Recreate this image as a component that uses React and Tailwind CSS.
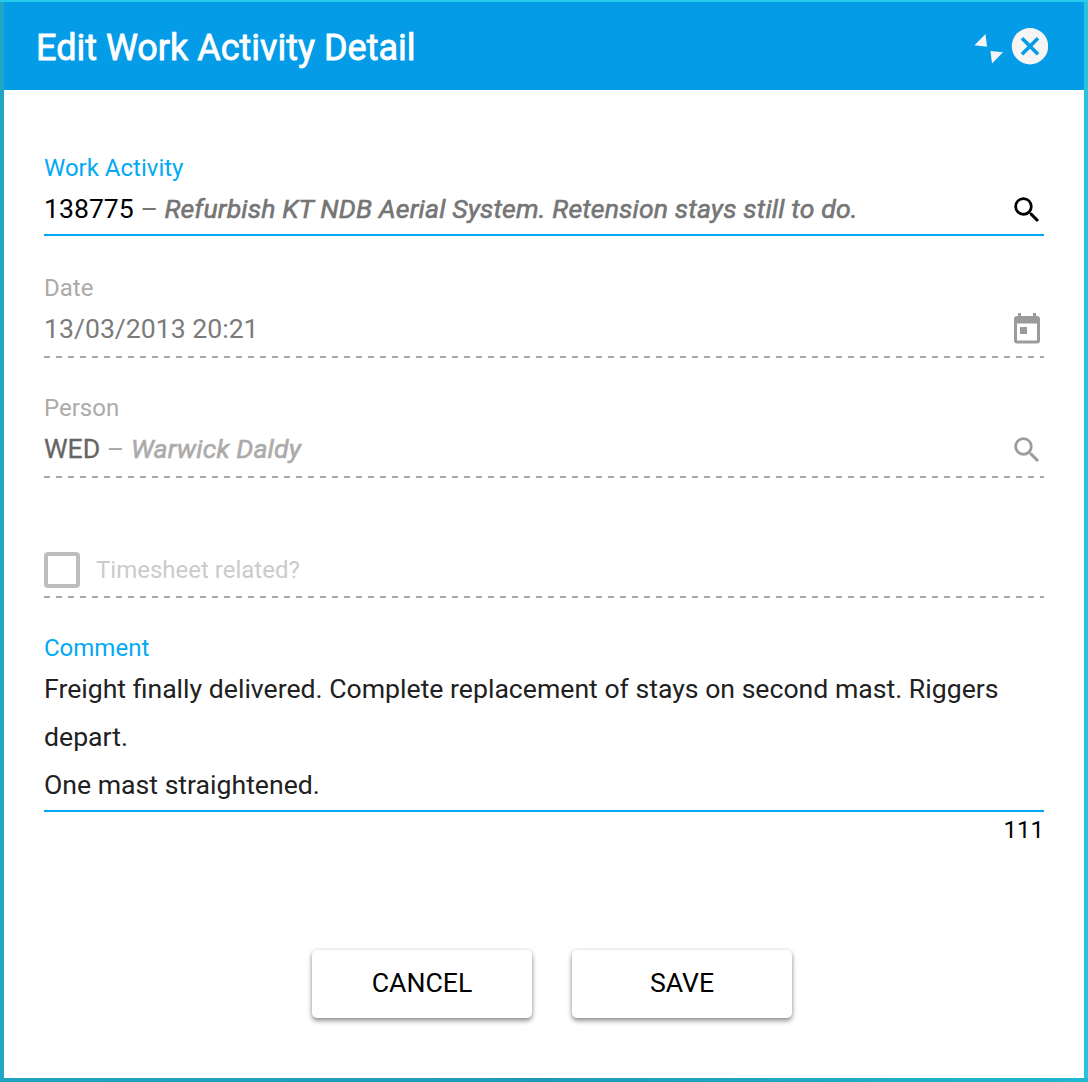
import React from "react";

function SearchIcon({ className }) {
  return (
    <svg viewBox="0 0 24 24" fill="currentColor" className={`mt-[2px] size-[34px] shrink-0 ${className}`}>
      <path d="M15.5 14h-.79l-.28-.27A6.471 6.471 0 0 0 16 9.5 6.5 6.5 0 1 0 9.5 16c1.61 0 3.09-.59 4.23-1.57l.27.28v.79l5 4.99L20.49 19l-4.99-5zm-6 0C7.01 14 5 11.99 5 9.5S7.01 5 9.5 5 14 7.01 14 9.5 11.99 14 9.500 14z" />
    </svg>
  );
}

function CalendarIcon() {
  return (
    <svg viewBox="0 0 26 31" className="mr-1 -mt-px h-[31px] w-[26px] shrink-0 text-[#9b9b9b]" fill="currentColor">
      <path fillRule="evenodd" d="M4 0h3v3h12V0h3v3h1a3 3 0 0 1 3 3v21.500a3 3 0 0 1-3 3H3a3 3 0 0 1-3-3V6a3 3 0 0 1 3-3h1zM3 10.500v17h20v-17z" />
      <path d="M6 14h7v7H6z" />
    </svg>
  );
}

const DASHES =
  "bg-[repeating-linear-gradient(to_right,#a9a9a9_0,#a9a9a9_6px,transparent_6px,transparent_12px)]";

const DESCRIPTION = "tracking-[0.135px] italic [-webkit-text-stroke:0.6px_currentColor]";

function Field({ label, active, icon, children }) {
  return (
    <div className="flex h-[120px] flex-col">
      <div className={`mt-[30px] h-9 text-[24px] leading-9 ${active ? "text-[#03a9f4]" : "text-[#ababab]"}`}>
        {label}
      </div>
      <div className="flex h-[48px] items-center justify-between pb-[2px] text-[26.64px] leading-[44px]">
        <div className="whitespace-nowrap">{children}</div>
        {icon}
      </div>
      <div className={`h-[2px] shrink-0 ${active ? "bg-[#03a9f4]" : `mt-[2px] ${DASHES}`}`} />
    </div>
  );
}

export default function App() {
  return (
    <div className="h-[1082px] w-[1088px] bg-[linear-gradient(to_right,#22a6c3,#25c3de)] font-[Roboto,sans-serif]">
      <div className="h-[2px] bg-[#26cbea]" />
      <div className="mx-1 flex h-[1076px] flex-col bg-white">
        <header className="flex h-[88px] shrink-0 items-center justify-between bg-[#049be7] pr-9 pl-8 text-white">
          <h1 className="pt-1 text-[36px] leading-[84px] [-webkit-text-stroke:0.8px_currentColor]">
            Edit Work Activity Detail
          </h1>
          <div className="flex items-center gap-2 text-[#f5f5f5]">
            <svg viewBox="0 0 29 30" className="mt-[5px] h-[30px] w-[29px]" fill="currentColor">
              <path d="M11.500 0 13 12.800 0.500 11.300zM16.500 17 29 18.300 18 29.500z" />
            </svg>
            <svg viewBox="0 0 37 37" className="size-[37px]">
              <circle cx="19" cy="18.200" r="18.200" fill="currentColor" />
              <path d="M11 10.200 27 26.200M27 10.200 11 26.200" stroke="#049be7" strokeWidth="3.600" />
            </svg>
          </div>
        </header>

        <main className="flex flex-col px-10 pt-[30px]">
          <Field label="Work Activity" active icon={<SearchIcon className="text-black" />}>
            <span className="text-black">138775</span>
            <span className="text-[#757575]"> – </span>
            <span className={`text-[#757575] ${DESCRIPTION}`}>
              Refurbish KT NDB Aerial System. Retension stays still to do.
            </span>
          </Field>
          <Field label="Date" icon={<CalendarIcon />}>
            <span className="text-[#7b7b7b]">13/03/2013 20:21</span>
          </Field>
          <Field label="Person" icon={<SearchIcon className="text-[#9b9b9b]" />}>
            <span className="text-[#666] [-webkit-text-stroke:0.3px_currentColor]">WED</span>
            <span className="text-[#ababab]"> – </span>
            <span className={`text-[#ababab] ${DESCRIPTION}`}>Warwick Daldy</span>
          </Field>

          <div className="flex h-[120px] flex-col justify-end pb-[2px]">
            <div className="mb-2 flex items-center gap-4">
              <div className="size-9 rounded-[4px] border-4 border-[#bdbdbd]" />
              <span className="text-[24px] leading-9 text-[#cbcbcb]">Timesheet related?</span>
            </div>
            <div className={`h-[2px] shrink-0 ${DASHES}`} />
          </div>

          <div className="pt-[30px]">
            <div className="h-9 text-[24px] leading-9 text-[#03a9f4]">Comment</div>
            <div className="-mt-px h-[147px] border-b-2 border-[#03a9f4] text-[26.64px] leading-[48px] text-[#212121]">
              <div className="whitespace-nowrap">
                <p>Freight finally delivered. Complete replacement of stays on second mast. Riggers</p>
                <p>depart.</p>
                <p>One mast straightened.</p>
              </div>
            </div>
            <div className="text-right text-[24px] leading-9 text-black">111</div>
          </div>

          <div className="mt-[102px] ml-[268px] flex gap-10">
            {["CANCEL", "SAVE"].map((label) => (
              <button
                key={label}
                className="h-[68px] w-[220px] rounded-[5px] bg-white pb-[2px] text-[26.64px] leading-[66px] text-black shadow-[0_3px_5px_rgba(0,0,0,0.4),0_0_4px_rgba(0,0,0,0.12)]"
              >
                {label}
              </button>
            ))}
          </div>
        </main>
      </div>
      <div className="h-1 bg-[linear-gradient(to_right,#20a4c0,#1d9bb6_50%,#20b7d1)]" />
    </div>
  );
}
